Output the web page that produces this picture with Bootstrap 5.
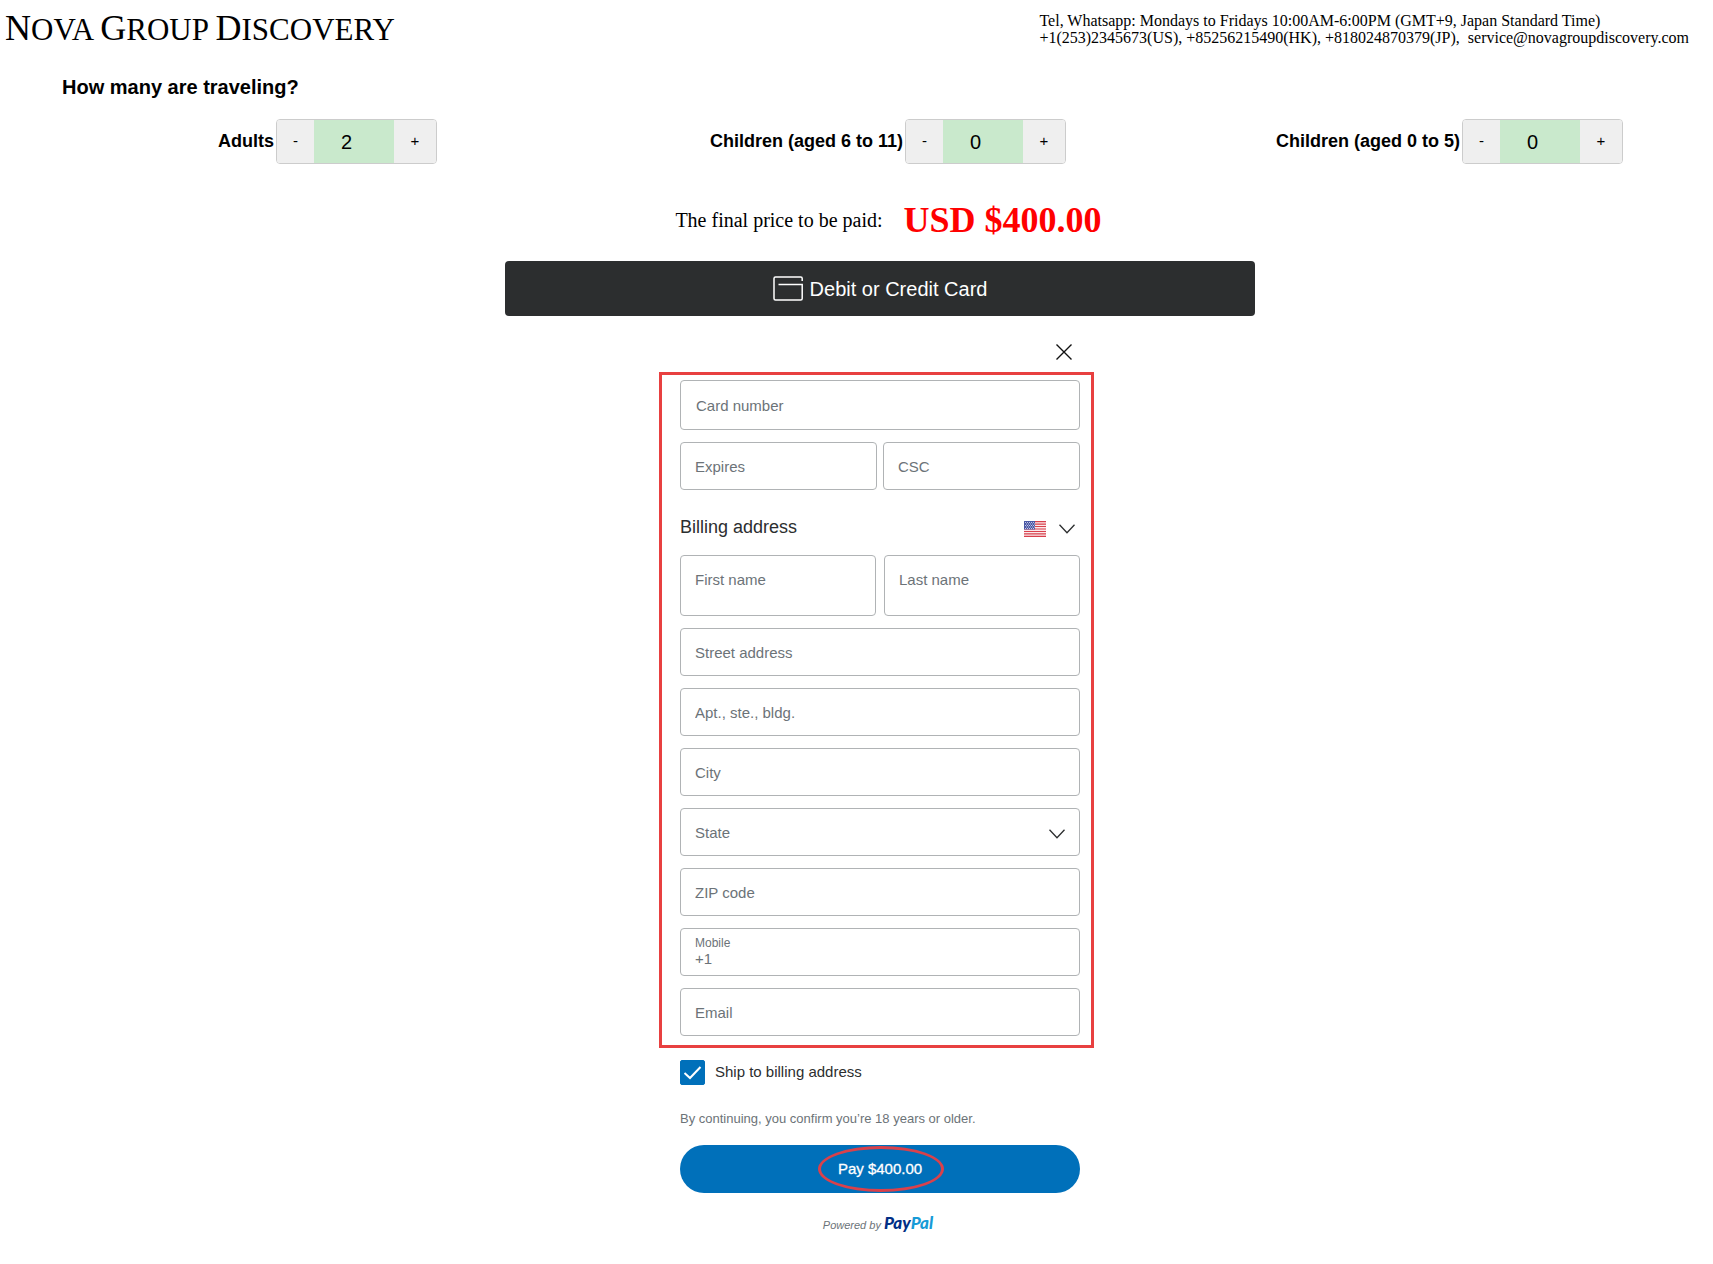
<!DOCTYPE html>
<html lang="en">
<head>
<meta charset="utf-8">
<meta name="viewport" content="width=device-width, initial-scale=1">
<title>Nova Group Discovery</title>
<link rel="stylesheet" href="https://cdn.jsdelivr.net/npm/bootstrap@5.3.0/dist/css/bootstrap.min.css">
<style>
  body { font-family: "Liberation Sans", Arial, sans-serif; color: #000; background: #fff; }
  .site-head { padding: 8px 24px 0 5px; height: 68px; }
  .brand-name { font-family: "Liberation Serif", "Times New Roman", serif; font-size: 31px; line-height: 40px; color: #000; text-transform: uppercase; }
  .brand-name b { font-weight: 400; font-size: 36px; }
  .contact-info { font-family: "Liberation Serif", Georgia, serif; font-size: 16px; line-height: 17px; padding-top: 4px; white-space: pre-wrap; }
  .contact-info a { color: inherit; }
  .question { font-size: 20px; line-height: 24px; padding: 7px 0 0 62px; }
  .traveler-grid { display: grid; grid-template-columns: 437fr 629fr 557fr 90fr; padding-top: 20px; }
  .traveler-cell { gap: 2px; }
  .traveler-grid label { font-size: 18px; }
  .stepper { border: 1px solid #ccc; border-radius: 4px; width: 161px; height: 45px; overflow: hidden; }
  .stepper button { border: 0; background: #efefef; font-size: 15px; padding: 0; }
  .stepper .step-down { width: 37px; }
  .stepper .step-up { width: 42px; }
  .stepper input { border: 0; border-radius: 0; background: #c9e9cc; width: 80px; padding: 0 15px 0 0; font-size: 20px; text-align: center; }
  .price-line { padding: 34px 0 0 64px; font-family: "Liberation Serif", "Times New Roman", serif; font-size: 20px; line-height: 44px; gap: 21px; }
  .price-line strong { font-size: 36px; color: #f00; }
  .checkout { padding-left: 47px; }
  .card-bar { width: 100%; max-width: 750px; height: 55px; margin-top: 19px; background: #2c2e2f; color: #fff; border: 0; border-radius: 4px; font-size: 20px; gap: 7px; }
  .pay-form { width: 100%; max-width: 400px; }
  .close-x { border: 0; background: none; padding: 0; margin: 28px 8px 0 0; height: 16px; line-height: 0; }
  .fields { margin-top: 20px; gap: 12px; }
  .fields::after { content: ""; position: absolute; inset: -8px -14px -12px -21px; border: 3px solid #e84040; pointer-events: none; }
  .fields .form-control, .fields .form-select { height: 48px; border: 1px solid #b0b3b5; border-radius: 4px; font-size: 15px; color: #6c7378; padding: 0 14px; background-color: #fff; }
  .fields .form-control::placeholder { color: #6c7378; opacity: 1; }
  .fields .form-control.tall-number { height: 50px; padding-left: 15px; }
  .fields .form-control.tall-name { height: 61px; padding-bottom: 12px; }
  .fields .form-select { padding-top: 2px; background-image: url("data:image/svg+xml,%3Csvg xmlns='http://www.w3.org/2000/svg' viewBox='0 0 16 10'%3E%3Cpath fill='none' stroke='%232c2e2f' stroke-width='1.3' d='M.5 .8 8 8.8 15.5 .8'/%3E%3C/svg%3E"); background-size: 16px 10px; background-position: right 14px top 20px; }
  .split-tight { gap: 6px; }
  .split-wide { gap: 8px; }
  .billing-title { font-size: 18px; line-height: 24px; color: #2c2e2f; padding: 13px 0 4px; }
  .country-pick { gap: 13px; padding: 3px 5px 0 0; }
  .country-pick select { inset: 0; opacity: 0; width: 100%; }
  .mobile-box label { left: 15px; top: 8px; font-size: 12px; line-height: 14px; color: #6c7378; }
  .fields .mobile-box .form-control { padding-top: 12px; }
  .ship-row { margin-top: 24px; gap: 10px; font-size: 15px; color: #2c2e2f; }
  .ship-row .form-check-input { width: 25px; height: 25px; margin: 0; border-radius: 2px; }
  .ship-row .form-check-input:checked { background-color: #0070ba; border-color: #0070ba; background-size: 19px 15px; background-image: url("data:image/svg+xml,%3Csvg xmlns='http://www.w3.org/2000/svg' viewBox='0 0 19 15'%3E%3Cpath fill='none' stroke='%23fff' stroke-width='2' d='M1.5 8 7 13 17.500 2'/%3E%3C/svg%3E"); }
  .age-note { margin: 24px 0 0; font-size: 13px; line-height: 20px; color: #6c7378; }
  .pay-btn { height: 48px; margin-top: 16px; background: #0070ba; color: #fff; border: 0; border-radius: 24px; font-size: 15px; -webkit-text-stroke: .3px #fff; }
  .pay-btn::after { content: ""; position: absolute; left: calc(50% - 62px); top: 1px; width: 126px; height: 46px; border: 3px solid #d9414b; border-radius: 50%; }
  .powered { margin-top: 20px; font-size: 11px; line-height: 20px; font-style: italic; color: #6c7378; gap: 3px; padding-right: 4px; }
  .pp-mark { font-family: Lato, sans-serif; font-weight: 900; font-size: 17px; color: #012f86; }
  .pp-mark span { color: #179bd7; }
</style>
<script src="https://cdn.jsdelivr.net/npm/bootstrap@5.3.0/dist/js/bootstrap.bundle.min.js"></script>
</head>
<body>
<header class="site-head d-flex justify-content-between align-items-start">
  <a class="brand-name text-decoration-none" href="#"><b>N</b>ova <b>G</b>roup <b>D</b>iscovery</a>
  <div class="contact-info">Tel, Whatsapp: Mondays to Fridays 10:00AM-6:00PM (GMT+9, Japan Standard Time)<br>+1(253)2345673(US), +85256215490(HK), +818024870379(JP),  <a class="text-decoration-none" href="#">service@novagroupdiscovery.com</a></div>
</header>
<main>
  <h1 class="question fw-bold mb-0">How many are traveling?</h1>
  <div class="traveler-grid">
    <div class="traveler-cell d-flex justify-content-end align-items-center">
      <label class="fw-bold" for="adults">Adults</label>
      <div class="stepper d-flex"><button type="button" class="step-down">-</button><input id="adults" type="text" value="2"><button type="button" class="step-up">+</button></div>
    </div>
    <div class="traveler-cell d-flex justify-content-end align-items-center">
      <label class="fw-bold" for="kids">Children (aged 6 to 11)</label>
      <div class="stepper d-flex"><button type="button" class="step-down">-</button><input id="kids" type="text" value="0"><button type="button" class="step-up">+</button></div>
    </div>
    <div class="traveler-cell d-flex justify-content-end align-items-center">
      <label class="fw-bold" for="infants">Children (aged 0 to 5)</label>
      <div class="stepper d-flex"><button type="button" class="step-down">-</button><input id="infants" type="text" value="0"><button type="button" class="step-up">+</button></div>
    </div>
  </div>
  <div class="price-line d-flex justify-content-center align-items-center"><span>The final price to be paid:</span><strong>USD $400.00</strong></div>

  <div class="checkout d-flex flex-column align-items-center">
    <button type="button" class="card-bar d-flex justify-content-center align-items-center">
      <svg width="30" height="25" viewBox="0 0 30 25" fill="none" stroke="#fff" stroke-width="1.500"><path d="M29.200 5V2.500a1.500 1.500 0 0 0-1.500-1.500H2.500A1.500 1.500 0 0 0 1 2.500v20A1.500 1.500 0 0 0 2.500 24h25.200a1.500 1.500 0 0 0 1.500-1.500V8.500H5.500"/></svg>
      <span>Debit or Credit Card</span>
    </button>
    <form class="pay-form d-flex flex-column">
      <button type="button" class="close-x align-self-end" aria-label="Close"><svg width="16" height="16" viewBox="0 0 16 16" stroke="#111" stroke-width="1.400"><path d="M.5 .5 15.500 15.500M15.500 .5 .5 15.500"/></svg></button>
      <div class="fields position-relative d-flex flex-column">
        <input class="form-control tall-number" type="text" aria-label="Card number" placeholder="Card number">
        <div class="split-tight d-flex">
          <input class="form-control" type="text" aria-label="Expires" placeholder="Expires">
          <input class="form-control" type="text" aria-label="CSC" placeholder="CSC">
        </div>
        <div class="billing-title d-flex justify-content-between align-items-center">
          <span>Billing address</span>
          <div class="country-pick position-relative d-flex align-items-center">
            <svg width="22" height="16" viewBox="0 0 22 16"><path fill="#fbe9ea" d="M0 0h22v16H0z"/><path stroke="#d8404c" stroke-width="1.200" d="M0 .6h22M0 3.100h22M0 5.500h22M0 8h22M0 10.500h22M0 12.900h22M0 15.400h22"/><path fill="#4a58a5" d="M0 0h11v8.500H0z"/><path stroke="#c3c8e6" stroke-width="1" stroke-dasharray="1 1" d="M1 1.500h10M2 3h9M1 4.500h10M2 6h9M1 7.500h10"/></svg>
            <svg width="16" height="10" viewBox="0 0 16 10" fill="none" stroke="#2c2e2f" stroke-width="1.300"><path d="M.5 .8 8 8.800 15.500 .8"/></svg>
            <select class="position-absolute" aria-label="Country"><option>United States</option></select>
          </div>
        </div>
        <div class="split-wide d-flex">
          <input class="form-control tall-name" type="text" aria-label="First name" placeholder="First name">
          <input class="form-control tall-name" type="text" aria-label="Last name" placeholder="Last name">
        </div>
        <input class="form-control" type="text" aria-label="Street address" placeholder="Street address">
        <input class="form-control" type="text" aria-label="Apartment" placeholder="Apt., ste., bldg.">
        <input class="form-control" type="text" aria-label="City" placeholder="City">
        <select class="form-select" aria-label="State"><option>State</option></select>
        <input class="form-control" type="text" aria-label="ZIP code" placeholder="ZIP code">
        <div class="mobile-box position-relative">
          <label class="position-absolute" for="mobile">Mobile</label>
          <input class="form-control" id="mobile" type="tel" value="+1">
        </div>
        <input class="form-control" type="email" aria-label="Email" placeholder="Email">
      </div>
      <div class="ship-row d-flex align-items-center">
        <input class="form-check-input" type="checkbox" id="ship" checked>
        <label for="ship">Ship to billing address</label>
      </div>
      <p class="age-note">By continuing, you confirm you’re 18 years or older.</p>
      <button type="button" class="pay-btn position-relative">Pay $400.00</button>
      <div class="powered d-flex justify-content-center align-items-baseline"><span>Powered by</span><span class="pp-mark">Pay<span>Pal</span></span></div>
    </form>
  </div>
</main>
</body>
</html>
